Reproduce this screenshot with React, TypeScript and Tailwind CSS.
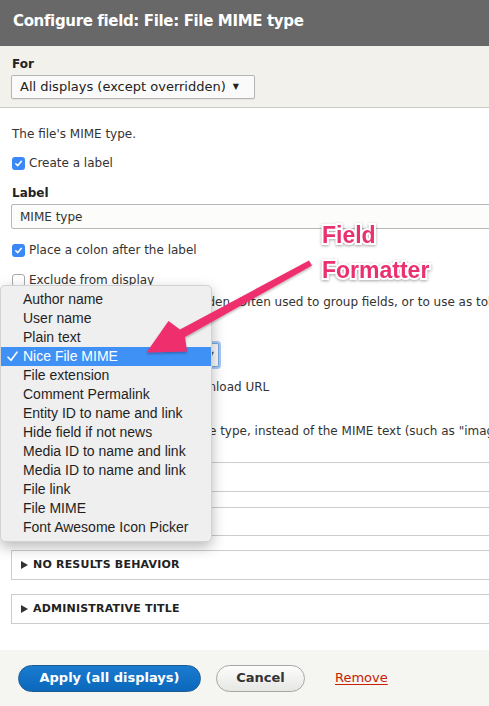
const menuItems = [
  'Author name',
  'User name',
  'Plain text',
  'Nice File MIME',
  'File extension',
  'Comment Permalink',
  'Entity ID to name and link',
  'Hide field if not news',
  'Media ID to name and link',
  'Media ID to name and link',
  'File link',
  'File MIME',
  'Font Awesome Icon Picker',
]

function Check({ checked }: { checked?: boolean }) {
  if (!checked) {
    return <span className="block h-[13px] w-[13px] shrink-0 rounded-[3px] border border-[#a9a9a9] bg-white" />
  }
  return (
    <span className="flex h-[13px] w-[13px] shrink-0 items-center justify-center rounded-[3px] bg-[#3a88f6]">
      <svg width="9" height="9" viewBox="0 0 10 10">
        <path d="M2 5.3l2.1 2.1L8.2 2.6" stroke="white" strokeWidth="1.7" fill="none" strokeLinecap="round" strokeLinejoin="round" />
      </svg>
    </span>
  )
}

function CheckRow({ checked, label, className }: { checked?: boolean; label: string; className: string }) {
  return (
    <div className={`flex h-4 items-center gap-[4px] pl-px leading-4 ${className}`}>
      <Check checked={checked} />
      <span className="whitespace-nowrap">{label}</span>
    </div>
  )
}

function Fieldset({ title, className }: { title: string; className: string }) {
  return (
    <div className={`flex w-[560px] items-center border border-[#cccccc] pl-[9px] ${className}`}>
      <svg width="7" height="8" viewBox="0 0 7 8" className="mr-[5px]">
        <path d="M0 0L7 4L0 8Z" fill="#333" />
      </svg>
      <span className="text-[11px] font-bold uppercase tracking-[0.2px] text-[#222]">{title}</span>
    </div>
  )
}

export default function App() {
  return (
    <div className="relative h-[706px] w-[489px] overflow-hidden bg-white font-['DejaVu_Sans',sans-serif] text-[12px] text-[#333]">
      {/* Dialog title */}
      <div className="flex h-[46px] items-center bg-[#686868] pb-[4px] pl-[13px]">
        <h1 className="text-[15px] font-bold tracking-[-0.35px] text-white">Configure field: File: File MIME type</h1>
      </div>

      {/* Override section */}
      <div className="border-b border-[#cbcbc6] bg-[#f2f1eb] pb-[8px] pl-[11px] pt-[10px]">
        <div className="h-4 pl-px font-bold leading-4 text-[#222]">For</div>
        <div className="mt-[3px] flex h-[24px] w-[244px] items-center rounded-[2px] border border-[#b5b5b5] bg-[#fafafa] pl-[8px] text-[13px] text-[#222] shadow-[0_1px_1px_rgba(0,0,0,0.06)]">
          <span>All displays (except overridden)</span>
          <span className="ml-[7px] text-[8px]">▼</span>
        </div>
      </div>

      {/* Form body */}
      <div className="pl-[11px]">
        <p className="mt-[18px] h-4 pl-px leading-4">The file's MIME type.</p>
        <CheckRow checked label="Create a label" className="mt-[13px]" />
        <div className="mt-[14px] h-4 pl-px font-bold leading-4 text-[#222]">Label</div>
        <div className="mt-[3px] flex h-[25px] w-[560px] items-center rounded-[2px] border border-[#b8b8b8] bg-[#fcfcfa] pl-[8px] text-[#333]">
          MIME type
        </div>
        <CheckRow checked label="Place a colon after the label" className="mt-[13px]" />
        <CheckRow label="Exclude from display" className="mt-[14px]" />
        <p className="mt-[6px] h-4 whitespace-nowrap pl-[15px] leading-4">
          Enable to load this field as hidden. Often used to group fields, or to use as token.
        </p>
        <div className="mt-[12px] h-4 pl-px font-bold leading-4 text-[#222]">Formatter</div>
        <div className="mt-[5px] flex h-[24px] w-[208px] items-center justify-between rounded-[2px] border border-[#7aa7e0] bg-[#fafafa] pl-[8px] pr-[4px] shadow-[0_0_0_2px_rgba(93,156,236,0.55)]">
          <span>Nice File MIME</span>
          <span className="text-[8px] text-[#555]">▼</span>
        </div>
        <div className="mt-[12px] flex h-4 items-center gap-[4px] pl-px leading-4">
          <Check />
          <span className="whitespace-nowrap pl-[61px]">Display the file download URL</span>
        </div>
        <CheckRow label="Display the file type icon" className="mt-[7px]" />
        <p className="mt-[5px] -ml-[12px] h-4 whitespace-nowrap leading-4">
          Display an icon representing the file type, instead of the MIME text (such as "image/jpeg")
        </p>

        <Fieldset title="Style settings" className="mt-[23px] h-[30px]" />
        <Fieldset title="Rewrite results" className="mt-[15px] h-[29px]" />
        <Fieldset title="No results behavior" className="mt-[14px] h-[30px]" />
        <Fieldset title="Administrative title" className="mt-[14px] h-[30px]" />
      </div>

      {/* Button pane */}
      <div className="mt-[26px] flex h-[56px] items-center bg-[#f5f5f2] pl-[18px]">
        <button className="flex h-[27px] w-[183px] items-center justify-center rounded-full border border-[#1e5c90] bg-[linear-gradient(#1a7bd0,#0b68bb)] text-[13px] font-bold text-white">
          Apply (all displays)
        </button>
        <button className="ml-[15px] flex h-[27px] w-[89px] items-center justify-center rounded-full border border-[#a6a6a6] bg-[linear-gradient(#fdfdfd,#e6e6e3)] text-[13px] font-bold text-[#333]">
          Cancel
        </button>
        <a className="ml-[30px] text-[13px] text-[#c72100] underline underline-offset-2">Remove</a>
      </div>

      {/* Open native select menu */}
      <div className="absolute left-0 top-[285px] w-[212px] rounded-[5px] border border-[#d2d2d2] bg-[#efefef] py-[4px] font-['Liberation_Sans',sans-serif] text-[14px] text-[#1f1f1f] shadow-[0_5px_14px_rgba(0,0,0,0.28)]">
        {menuItems.map((item, i) => {
          const active = i === 3
          return (
            <div
              key={i}
              className={`relative flex h-[19px] items-center pl-[22px] ${active ? 'bg-[#3f91f6] text-white' : ''}`}
            >
              {active && (
                <svg width="11" height="11" viewBox="0 0 11 11" className="absolute left-[6px] top-[4px]">
                  <path d="M1 6.2L4 9.2L10 1.2" stroke="white" strokeWidth="1.6" fill="none" strokeLinecap="round" />
                </svg>
              )}
              {item}
            </div>
          )
        })}
      </div>

      {/* Annotation arrow */}
      <svg className="pointer-events-none absolute left-0 top-0" width="489" height="706" viewBox="0 0 489 706">
        <defs>
          <filter id="sh" x="-10%" y="-10%" width="120%" height="130%">
            <feDropShadow dx="0" dy="1.5" stdDeviation="1.2" floodColor="#000" floodOpacity="0.3" />
          </filter>
        </defs>
        <polygon
          points="309,260.5 312,265.5 185,337 187,351.5 146.5,352.5 168.5,321 180,329.5"
          fill="#ef2f6e"
          filter="url(#sh)"
        />
      </svg>

      {/* Annotation label */}
      <div className="absolute left-[322px] top-[218px] font-['Liberation_Sans',sans-serif] text-[23px] font-bold leading-[35px] text-[#ea316f] [paint-order:stroke_fill] [-webkit-text-stroke:4px_white] [filter:drop-shadow(0_1px_1.5px_rgba(0,0,0,0.35))]">
        <div>Field</div>
        <div>Formatter</div>
      </div>
    </div>
  )
}
